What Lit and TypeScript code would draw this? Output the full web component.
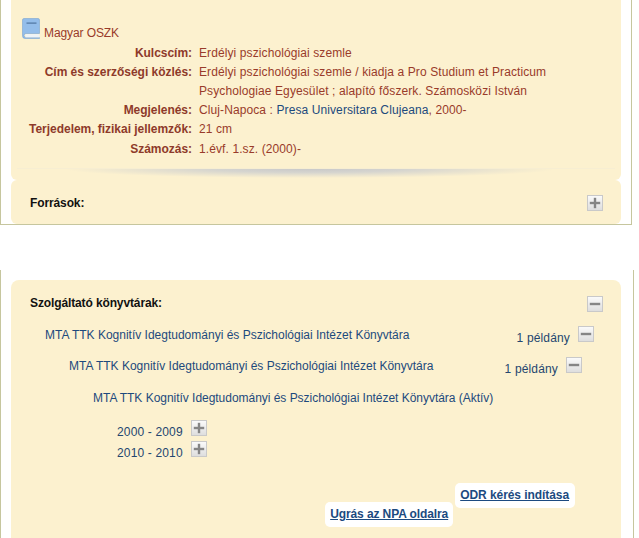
import { LitElement, html, svg, css } from "lit";
import { customElement } from "lit/decorators.js";

const toggle = (kind: "plus" | "minus") => html`<span class="tg">
  <svg width="12" height="12" viewBox="0 0 12 12">
    <rect x="0.8" y="4.8" width="10.4" height="2.4" fill="#858585"></rect>
    ${kind === "plus" ? svg`<rect x="4.8" y="0.8" width="2.4" height="10.4" fill="#858585"></rect>` : ""}
  </svg>
</span>`;

@customElement("app-root")
export class AppRoot extends LitElement {
  static styles = css`
    :host {
      display: block;
      width: 639px;
      height: 538px;
      overflow: hidden;
      background: #fff;
      font-family: "Liberation Sans", Arial, sans-serif;
      font-size: 12px;
      color: #993b2a;
    }
    .frame1 {
      box-sizing: border-box;
      width: 632px;
      height: 225px;
      border: 1px solid #c6c69e;
      border-top: 0;
      padding: 0 10px;
    }
    .frame2 {
      box-sizing: border-box;
      width: 634px;
      height: 268px;
      margin-top: 45px;
      border: 1px solid #c6c69e;
      border-width: 0 1px;
      padding: 10px 12px 0 10px;
    }
    .card {
      background: #fcf1cf;
    }
    .details {
      box-sizing: border-box;
      height: 180px;
      padding-top: 17px;
      border-radius: 0 0 6px 6px;
      position: relative;
      overflow: hidden;
    }
    .shade {
      position: absolute;
      left: 6px;
      right: 6px;
      top: 168px;
      height: 10px;
      border-top: 1px solid #f7eed2;
      background: radial-gradient(ellipse 245px 9px at 49% 0, #c9c9c9 0%, #d6d5cf 40%, rgba(252, 241, 207, 0) 100%);
    }
    .source {
      display: flex;
      align-items: center;
      justify-content: space-between;
      box-sizing: border-box;
      height: 44px;
      padding: 1px 18px 0 19px;
      border-radius: 6px;
      font-weight: bold;
      letter-spacing: -0.12px;
      color: #111;
    }
    .origin {
      display: flex;
      align-items: flex-end;
      height: 22px;
      padding-left: 11px;
      gap: 4px;
      margin-bottom: 1px;
    }
    .origin span {
      line-height: 14px;
      margin-bottom: -1px;
      letter-spacing: -0.1px;
    }
    .meta {
      display: grid;
      grid-template-columns: 181px 1fr;
      column-gap: 7px;
      line-height: 19px;
      margin: 5px 0 0;
    }
    .meta dt {
      grid-column: 1;
      text-align: right;
      font-weight: bold;
      letter-spacing: -0.03px;
      color: #8e3a2a;
    }
    .meta dd {
      grid-column: 2;
      margin: 0;
      width: 370px;
      letter-spacing: 0.1px;
    }
    .meta .last {
      margin-top: 1px;
    }
    .link {
      color: #1d4a7d;
    }
    .tg {
      box-sizing: border-box;
      display: inline-flex;
      align-items: center;
      justify-content: center;
      width: 16px;
      height: 16px;
      border: 1px solid #c9c9c9;
      background: linear-gradient(#fafafa, #dedede);
      flex: none;
    }
    .libs {
      box-sizing: border-box;
      height: 258px;
      border-radius: 8px 8px 0 0;
      padding-top: 16px;
    }
    .libs-head {
      display: flex;
      justify-content: space-between;
      padding: 0 18px 0 19px;
      font-weight: bold;
      letter-spacing: -0.12px;
      color: #111;
      line-height: 14px;
      height: 16px;
    }
    .lib {
      display: flex;
      color: #1d4a7d;
      line-height: 14px;
      height: 14px;
    }
    .lib .name {
      flex: 1;
    }
    .lib .count {
      margin: 3px 8px 0 0;
      letter-spacing: 0.15px;
      color: #24466f;
    }
    .lib .tg {
      margin-top: -2px;
    }
    .l1 {
      margin-top: 16px;
      padding: 0 27px 0 34px;
    }
    .l2 {
      margin-top: 17px;
      padding: 0 39px 0 58px;
    }
    .l3 {
      margin-top: 18px;
      padding-left: 82px;
      letter-spacing: -0.03px;
    }
    .year {
      display: flex;
      gap: 8px;
      padding-left: 106px;
      height: 21px;
      color: #24466f;
      line-height: 14px;
      letter-spacing: 0.15px;
    }
    .year .tg {
      margin-top: -5px;
    }
    .years {
      margin-top: 20px;
    }
    .actions {
      display: flex;
      justify-content: flex-end;
      align-items: flex-start;
      gap: 2px;
      padding: 16px 46px 0 0;
    }
    .btn {
      display: block;
      box-sizing: border-box;
      background: #fff;
      border-radius: 5px;
      height: 25px;
      line-height: 24px;
      padding: 0 6px 0 5px;
      font-weight: bold;
      letter-spacing: -0.07px;
      color: #1c4a80;
      text-decoration: underline;
    }
    .npa {
      margin-top: 19px;
      padding: 0 5px;
      letter-spacing: -0.1px;
    }
  `;

  render() {
    return html`
      <div class="frame1">
        <section class="card details">
          <div class="origin">
            <svg width="18" height="21" viewBox="0 0 18 21">
              <path d="M2 0.5h14a1.5 1.5 0 0 1 1.5 1.5v13.5H4a2 2 0 0 0-2 2 2 2 0 0 0 2 2h13.5v1H3a2.6 2.6 0 0 1-2.5-2.6V2A1.5 1.5 0 0 1 2 0.5z" fill="#93bdea" stroke="#7aa5d2" stroke-width="0.6"></path>
              <rect x="3.5" y="16.2" width="14" height="3.2" fill="#eef3f8"></rect>
              <rect x="4.5" y="4.5" width="10" height="1.2" fill="#4f76a0"></rect>
            </svg>
            <span>Magyar OSZK</span>
          </div>
          <dl class="meta">
            <dt>Kulcscím:</dt>
            <dd>Erdélyi pszichológiai szemle</dd>
            <dt>Cím és szerzőségi közlés:</dt>
            <dd>Erdélyi pszichológiai szemle / kiadja a Pro Studium et Practicum Psychologiae Egyesület ; alapító főszerk. Számosközi István</dd>
            <dt>Megjelenés:</dt>
            <dd>Cluj-Napoca : <span class="link">Presa Universitara Clujeana</span>, 2000-</dd>
            <dt>Terjedelem, fizikai jellemzők:</dt>
            <dd>21 cm</dd>
            <dt class="last">Számozás:</dt>
            <dd class="last">1.évf. 1.sz. (2000)-</dd>
          </dl>
          <div class="shade"></div>
        </section>
        <section class="card source">
          <span>Források:</span>
          ${toggle("plus")}
        </section>
      </div>
      <div class="frame2">
        <section class="card libs">
          <div class="libs-head"><span>Szolgáltató könyvtárak:</span>${toggle("minus")}</div>
          <div class="lib l1">
            <span class="name">MTA TTK Kognitív Idegtudományi és Pszichológiai Intézet Könyvtára</span>
            <span class="count">1 példány</span>${toggle("minus")}
          </div>
          <div class="lib l2">
            <span class="name">MTA TTK Kognitív Idegtudományi és Pszichológiai Intézet Könyvtára</span>
            <span class="count">1 példány</span>${toggle("minus")}
          </div>
          <div class="lib l3">
            <span class="name">MTA TTK Kognitív Idegtudományi és Pszichológiai Intézet Könyvtára (Aktív)</span>
          </div>
          <div class="years">
            <div class="year"><span>2000 - 2009</span>${toggle("plus")}</div>
            <div class="year"><span>2010 - 2010</span>${toggle("plus")}</div>
          </div>
          <div class="actions">
            <a class="btn npa">Ugrás az NPA oldalra</a>
            <a class="btn">ODR kérés indítása</a>
          </div>
        </section>
      </div>
    `;
  }
}
